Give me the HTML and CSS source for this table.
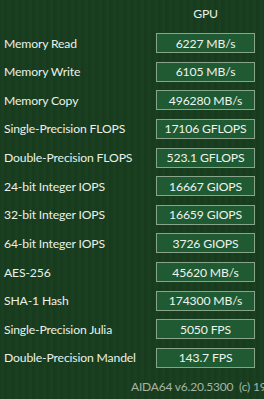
FILE: index.html
```html
<!DOCTYPE html>
<html>
<head>
<meta charset="utf-8">
<link rel="stylesheet" href="styles.css">
</head>
<body>
<div class="panel">
  <div class="grid">
    <div class="head-spacer"></div>
    <div class="head">GPU</div>

    <div class="label">Memory Read</div><div class="cell"><div class="box">6227 MB/s</div></div>
    <div class="label">Memory Write</div><div class="cell"><div class="box">6105 MB/s</div></div>
    <div class="label">Memory Copy</div><div class="cell"><div class="box">496280 MB/s</div></div>
    <div class="label">Single-Precision FLOPS</div><div class="cell"><div class="box">17106 GFLOPS</div></div>
    <div class="label">Double-Precision FLOPS</div><div class="cell"><div class="box">523.1 GFLOPS</div></div>
    <div class="label">24-bit Integer IOPS</div><div class="cell"><div class="box">16667 GIOPS</div></div>
    <div class="label">32-bit Integer IOPS</div><div class="cell"><div class="box">16659 GIOPS</div></div>
    <div class="label">64-bit Integer IOPS</div><div class="cell"><div class="box">3726 GIOPS</div></div>
    <div class="label">AES-256</div><div class="cell"><div class="box">45620 MB/s</div></div>
    <div class="label">SHA-1 Hash</div><div class="cell"><div class="box">174300 MB/s</div></div>
    <div class="label">Single-Precision Julia</div><div class="cell"><div class="box">5050 FPS</div></div>
    <div class="label">Double-Precision Mandel</div><div class="cell"><div class="box">143.7 FPS</div></div>
  </div>
  <div class="footer">AIDA64 v6.20.5300&nbsp;&nbsp;(c) 1995-2020 FinalWire Ltd.</div>
</div>
</body>
</html>
```
FILE: styles.css
```css
html, body {
  margin: 0;
  padding: 0;
  width: 264px;
  height: 399px;
  overflow: hidden;
}
body {
  background-color: #183c1e;
  background-image: repeating-linear-gradient(90deg,
    rgba(255,255,255,0.00) 0px,
    rgba(255,255,255,0.018) 3px,
    rgba(0,0,0,0.03) 5px,
    rgba(255,255,255,0.00) 7px);
  font-family: Lato, "Open Sans", sans-serif;
  font-size: 12.2px;
  letter-spacing: -0.15px;
  color: #e9f1e9;
}
.panel {
  padding-left: 4px;
}
.grid {
  display: grid;
  grid-template-columns: 152px 99px;
  grid-template-rows: 28.7px;
  grid-auto-rows: 28.64px;
}
.head {
  display: flex;
  align-items: center;
  justify-content: center;
  padding-bottom: 1px;
}
.label {
  display: flex;
  align-items: center;
  white-space: nowrap;
}
.cell {
  display: flex;
  align-items: center;
}
.box {
  box-sizing: border-box;
  width: 99px;
  height: 20px;
  border: 1px solid #88a58c;
  background: #1f5a33;
  display: flex;
  align-items: center;
  justify-content: center;
  white-space: nowrap;
  color: #eef4ee;
}
.footer {
  padding-left: 127px;
  padding-top: 7px;
  white-space: nowrap;
  overflow: hidden;
  font-size: 12px;
  letter-spacing: -0.2px;
  color: #a3b5a6;
}
```
